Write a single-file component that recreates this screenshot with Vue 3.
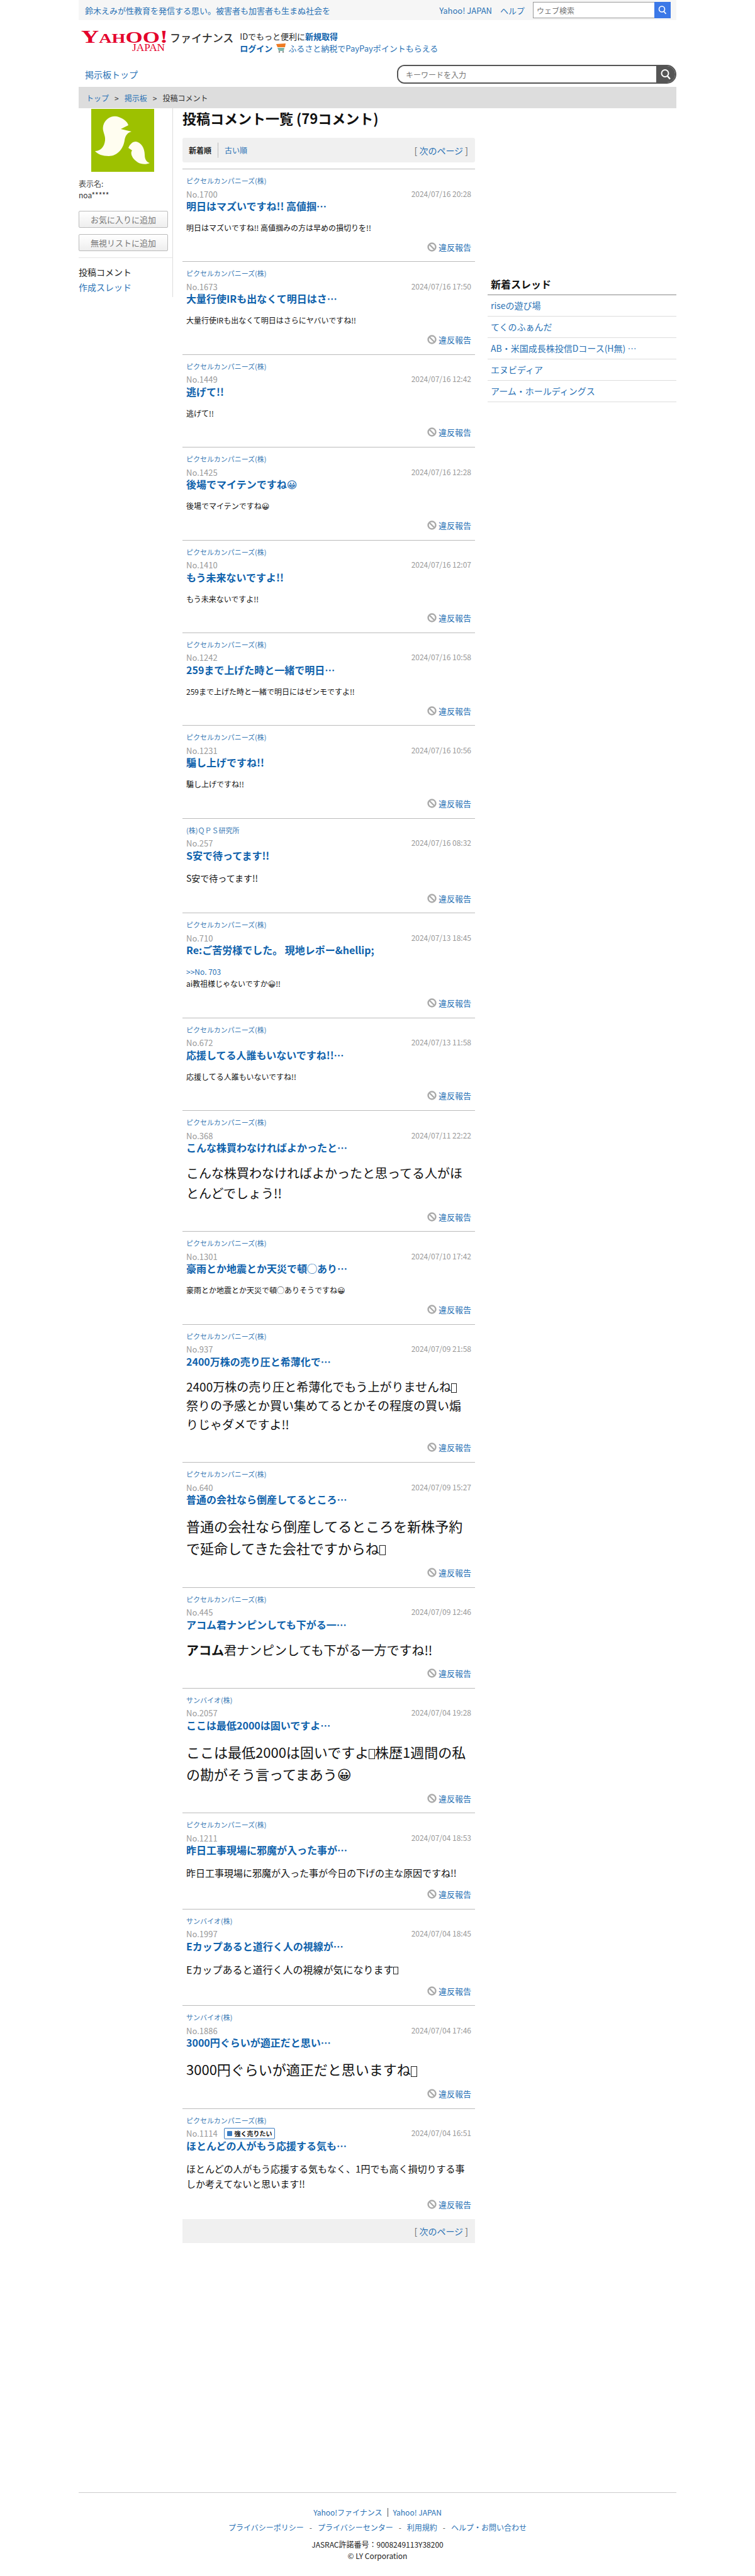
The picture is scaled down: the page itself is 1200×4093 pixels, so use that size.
<template>
  <div class="page">
    <div class="topbar">
      <a class="topbar-news">鈴木えみが性教育を発信する思い。被害者も加害者も生まぬ社会を</a>
      <div class="topbar-right">
        <a>Yahoo! JAPAN</a>
        <a>ヘルプ</a>
        <div class="web-search">
          <input type="text" placeholder="ウェブ検索" />
          <span class="web-search-btn">
            <svg width="16" height="16" viewBox="0 0 16 16">
              <circle cx="7" cy="6.5" r="4.5" fill="none" stroke="#fff" stroke-width="1.6" />
              <path d="M10 10l3.5 4" stroke="#fff" stroke-width="1.8" fill="none" />
            </svg>
          </span>
        </div>
      </div>
    </div>

    <div class="brand">
      <svg class="logo" width="140" height="46" viewBox="0 0 140 46">
        <text x="0" y="29" class="logo-main" textLength="138" lengthAdjust="spacingAndGlyphs">
          <tspan font-size="29">Y</tspan><tspan font-size="21">A</tspan><tspan font-size="21">H</tspan><tspan font-size="26">OO</tspan><tspan font-size="29">!</tspan>
        </text>
        <text x="81" y="42" class="logo-sub" textLength="52" lengthAdjust="spacingAndGlyphs">JAPAN</text>
      </svg>
      <span class="brand-name">ファイナンス</span>
      <div class="brand-info">
        <div>IDでもっと便利に<a class="strong">新規取得</a></div>
        <div class="brand-line">
          <a class="strong">ログイン</a>
          <svg class="cart" width="17" height="15" viewBox="0 0 17 15">
            <path d="M1 1l15-1-1 6H3z" fill="#ee7a22" />
            <path d="M3 7h11l-1 5H5z" fill="#7fb5a8" />
            <circle cx="6" cy="13.5" r="1.2" fill="#777" />
            <circle cx="12" cy="13.5" r="1.2" fill="#777" />
          </svg>
          <a>ふるさと納税でPayPayポイントもらえる</a>
        </div>
      </div>
    </div>

    <div class="navrow">
      <a class="nav-top">掲示板トップ</a>
      <div class="board-search">
        <input type="text" placeholder="キーワードを入力" />
        <span class="board-search-btn">
          <svg width="20" height="20" viewBox="0 0 20 20">
            <circle cx="9" cy="8.5" r="5.5" fill="none" stroke="#fff" stroke-width="2" />
            <path d="M13 13l4 4.5" stroke="#fff" stroke-width="2.4" fill="none" />
          </svg>
        </span>
      </div>
    </div>

    <div class="breadcrumb">
      <a>トップ</a><span class="crumb-sep">&gt;</span><a>掲示板</a><span class="crumb-sep">&gt;</span><span>投稿コメント</span>
    </div>

    <div class="content">
      <aside class="side-left">
        <svg class="avatar" width="100" height="100" viewBox="0 0 100 100">
          <rect width="100" height="100" fill="#9dc100" />
          <path d="M19 27C22 15 34 9 44 13C52 16 58 21 59 26L47 32L64 36C57 38 54 43 53 50C51 64 41 75 28 75C18 75 10 72 6 67C15 67 21 60 22 50C23 41 17 36 19 27Z" fill="#fffdf0" />
          <path d="M71 52C65 52 61 57 59 62L65 66C61 71 66 80 74 85C79 88 87 89 93 86C88 85 85 80 85 73C85 62 79 53 71 52Z" fill="#fffdf0" />
        </svg>
        <div class="profile-label">表示名:</div>
        <div class="profile-name">noa*****</div>
        <div class="side-btn">お気に入りに追加</div>
        <div class="side-btn">無視リストに追加</div>
        <div class="side-menu">
          <div class="side-menu-item">投稿コメント</div>
          <a class="side-menu-item">作成スレッド</a>
        </div>
      </aside>

      <main class="main">
        <h1 class="page-title">投稿コメント一覧 (79コメント)</h1>
        <div class="sort-bar">
          <span class="sort-active">新着順</span>
          <a class="sort-link">古い順</a>
          <span class="pager">[ <a>次のページ</a> ]</span>
        </div>

        <article v-for="c in comments" :key="c.no" class="comment">
          <a class="company">{{ c.company }}</a>
          <div class="meta">
            <span class="no">No.{{ c.no }}</span>
            <span v-if="c.badge" class="badge"><i class="badge-mark"></i>{{ c.badge }}</span>
            <span class="date">{{ c.date }}</span>
          </div>
          <a class="title">{{ c.title }}</a>
          <div class="body" :style="{ fontSize: c.size + 'px' }">
            <a v-if="c.anchor" class="anchor">{{ c.anchor }}<br /></a>
            <b v-if="c.lead" class="lead">{{ c.lead }}</b>
            <template v-for="(part, i) in bodyParts(c.body)" :key="i">
              <span v-if="i > 0" class="tofu"></span>{{ part }}
            </template>
          </div>
          <div class="report">
            <svg width="15" height="15" viewBox="0 0 15 15">
              <circle cx="7.5" cy="7.5" r="6" fill="none" stroke="#aaa" stroke-width="2.4" />
              <path d="M3.5 3.5l8 8" stroke="#aaa" stroke-width="2.4" />
            </svg>
            <a>違反報告</a>
          </div>
        </article>

        <div class="pager-bar">
          <span class="pager">[ <a>次のページ</a> ]</span>
        </div>
      </main>

      <aside class="side-right">
        <h2 class="thread-heading">新着スレッド</h2>
        <a v-for="t in threads" :key="t" class="thread">{{ t }}</a>
      </aside>
    </div>

    <footer class="footer">
      <div class="footer-row first">
        <a>Yahoo!ファイナンス</a><span class="pipe"></span><a>Yahoo! JAPAN</a>
      </div>
      <div class="footer-row second">
        <a>プライバシーポリシー</a><span class="dash">-</span><a>プライバシーセンター</a><span class="dash">-</span><a>利用規約</a><span class="dash">-</span><a>ヘルプ・お問い合わせ</a>
      </div>
      <div class="footer-row third">JASRAC許諾番号：9008249113Y38200</div>
      <div class="footer-row fourth">© LY Corporation</div>
    </footer>
  </div>
</template>

<script setup>
const PIXEL = 'ピクセルカンパニーズ(株)'
const SANBIO = 'サンバイオ(株)'

const comments = [
  { company: PIXEL, no: 1700, date: '2024/07/16 20:28', title: '明日はマズいですね!! 高値掴…', body: '明日はマズいですね!! 高値掴みの方は早めの損切りを!!', size: 12 },
  { company: PIXEL, no: 1673, date: '2024/07/16 17:50', title: '大量行使IRも出なくて明日はさ…', body: '大量行使IRも出なくて明日はさらにヤバいですね!!', size: 12 },
  { company: PIXEL, no: 1449, date: '2024/07/16 12:42', title: '逃げて!!', body: '逃げて!!', size: 12 },
  { company: PIXEL, no: 1425, date: '2024/07/16 12:28', title: '後場でマイテンですね😀', body: '後場でマイテンですね😀', size: 12 },
  { company: PIXEL, no: 1410, date: '2024/07/16 12:07', title: 'もう未来ないですよ!!', body: 'もう未来ないですよ!!', size: 12 },
  { company: PIXEL, no: 1242, date: '2024/07/16 10:58', title: '259まで上げた時と一緒で明日…', body: '259まで上げた時と一緒で明日にはゼンモですよ!!', size: 12 },
  { company: PIXEL, no: 1231, date: '2024/07/16 10:56', title: '騙し上げですね!!', body: '騙し上げですね!!', size: 12 },
  { company: '(株)ＱＰＳ研究所', no: 257, date: '2024/07/16 08:32', title: 'S安で待ってます!!', body: 'S安で待ってます!!', size: 14 },
  { company: PIXEL, no: 710, date: '2024/07/13 18:45', title: 'Re:ご苦労様でした。 現地レポー&hellip;', anchor: '>>No. 703', body: 'ai教祖様じゃないですか😀!!', size: 12 },
  { company: PIXEL, no: 672, date: '2024/07/13 11:58', title: '応援してる人誰もいないですね!!…', body: '応援してる人誰もいないですね!!', size: 12 },
  { company: PIXEL, no: 368, date: '2024/07/11 22:22', title: 'こんな株買わなければよかったと…', body: 'こんな株買わなければよかったと思ってる人がほとんどでしょう!!', size: 20 },
  { company: PIXEL, no: 1301, date: '2024/07/10 17:42', title: '豪雨とか地震とか天災で頓◯あり…', body: '豪雨とか地震とか天災で頓◯ありそうですね😀', size: 12 },
  { company: PIXEL, no: 937, date: '2024/07/09 21:58', title: '2400万株の売り圧と希薄化で…', body: '2400万株の売り圧と希薄化でもう上がりませんね□\n祭りの予感とか買い集めてるとかその程度の買い煽りじゃダメですよ!!', size: 19 },
  { company: PIXEL, no: 640, date: '2024/07/09 15:27', title: '普通の会社なら倒産してるところ…', body: '普通の会社なら倒産してるところを新株予約で延命してきた会社ですからね□', size: 22 },
  { company: PIXEL, no: 445, date: '2024/07/09 12:46', title: 'アコム君ナンピンしても下がる一…', lead: 'アコム', body: '君ナンピンしても下がる一方ですね!!', size: 20 },
  { company: SANBIO, no: 2057, date: '2024/07/04 19:28', title: 'ここは最低2000は固いですよ…', body: 'ここは最低2000は固いですよ□株歴1週間の私の勘がそう言ってまあう😀', size: 22 },
  { company: PIXEL, no: 1211, date: '2024/07/04 18:53', title: '昨日工事現場に邪魔が入った事が…', body: '昨日工事現場に邪魔が入った事が今日の下げの主な原因ですね!!', size: 15 },
  { company: SANBIO, no: 1997, date: '2024/07/04 18:45', title: 'Eカップあると道行く人の視線が…', body: 'Eカップあると道行く人の視線が気になります□', size: 16 },
  { company: SANBIO, no: 1886, date: '2024/07/04 17:46', title: '3000円ぐらいが適正だと思い…', body: '3000円ぐらいが適正だと思いますね□', size: 22 },
  { company: PIXEL, no: 1114, date: '2024/07/04 16:51', badge: '強く売りたい', title: 'ほとんどの人がもう応援する気も…', body: 'ほとんどの人がもう応援する気もなく、1円でも高く損切りする事しか考えてないと思います!!', size: 15 },
]

const threads = ['riseの遊び場', 'てくのふぁんだ', 'AB・米国成長株投信Dコース(H無) …', 'エヌビディア', 'アーム・ホールディングス']

// the square stands for the glyph the original page could not draw
function bodyParts(text) {
  return text.split('□')
}
</script>

<style>
html,
body {
  background: #fff;
}
</style>

<style scoped>
.page {
  width: 950px;
  margin: 0 auto;
  font-family: "Noto Sans CJK JP", "DejaVu Sans", sans-serif;
  font-size: 12px;
  color: #222;
  height: 4093px;
  overflow: hidden;
}

a {
  color: #2a72b5;
  text-decoration: none;
}

.topbar {
  display: flex;
  justify-content: space-between;
  align-items: center;
  height: 32px;
  padding: 0 9px 0 10px;
  background: #f6f6f6;
  font-size: 13px;
}

.topbar-right {
  display: flex;
  align-items: center;
  gap: 13px;
}

.web-search {
  display: flex;
  width: 219px;
  height: 26px;
  border: 1px solid #999;
  box-sizing: border-box;
  background: #fff;
}

.web-search input {
  flex: 1;
  min-width: 0;
  border: 0;
  padding: 0 5px;
  font: 12px "Noto Sans CJK JP", sans-serif;
  outline: none;
}

.web-search-btn {
  display: flex;
  align-items: center;
  justify-content: center;
  width: 26px;
  margin: -1px -1px -1px 0;
  background: #3b78e7;
}

.brand {
  display: flex;
  height: 71px;
  padding: 7px 0 0 4px;
  box-sizing: border-box;
}

.logo {
  flex: none;
}

.logo-main {
  font-family: "Liberation Serif", serif;
  font-weight: 700;
  fill: #e4002b;
}

.logo-sub {
  font-family: "Liberation Serif", serif;
  font-size: 16px;
  fill: #e4002b;
}

.brand-name {
  margin: 9px 0 0 1px;
  font-size: 17px;
  line-height: 24px;
  font-weight: 500;
  color: #333;
}

.brand-info {
  margin: 9px 0 0 10px;
  font-size: 13px;
  line-height: 19px;
  color: #222;
}

.brand-line {
  display: flex;
  align-items: center;
}

.strong {
  font-weight: 700;
  color: #0f62ac;
}

.cart {
  margin: 0 3px 0 5px;
}

.navrow {
  display: flex;
  justify-content: space-between;
  align-items: center;
  height: 30px;
  padding-left: 10px;
}

.nav-top {
  font-size: 14px;
}

.board-search {
  display: flex;
  width: 444px;
  height: 30px;
  box-sizing: border-box;
  border: 2px solid #555;
  border-radius: 12px 15px 15px 12px;
  overflow: hidden;
}

.board-search input {
  flex: 1;
  min-width: 0;
  border: 0;
  padding: 0 12px;
  font: 12px "Noto Sans CJK JP", sans-serif;
  outline: none;
}

.board-search-btn {
  display: flex;
  align-items: center;
  justify-content: center;
  width: 30px;
  background: #555;
}

.breadcrumb {
  display: flex;
  align-items: center;
  height: 34px;
  margin-top: 5px;
  padding-left: 12px;
  background: #ddd;
  color: #333;
}

.crumb-sep {
  margin: 0 9px;
}

.content {
  display: flex;
  align-items: flex-start;
}

.side-left {
  box-sizing: border-box;
  width: 150px;
  height: 300px;
  padding-top: 1px;
  border-right: 1px solid #ddd;
}

.avatar {
  display: block;
  margin-left: 20px;
}

.profile-label {
  margin-top: 10px;
  line-height: 18px;
  color: #444;
}

.profile-name {
  line-height: 18px;
  color: #333;
}

.side-btn {
  width: 142px;
  height: 27px;
  box-sizing: border-box;
  margin-bottom: 10px;
  border: 1px solid #bbb;
  border-radius: 2px;
  background: linear-gradient(#fff, #eee);
  color: #777;
  font-size: 13px;
  line-height: 26px;
  text-align: center;
}

.profile-name + .side-btn {
  margin-top: 16px;
}

.side-menu {
  margin-top: 10px;
  padding-top: 10px;
  border-top: 1px solid #e5e5e5;
  font-size: 14px;
  line-height: 24px;
}

.side-menu-item {
  display: block;
}

.main {
  width: 465px;
  margin-left: 15px;
}

.page-title {
  margin: 0 0 17px;
  font-size: 22px;
  line-height: 30px;
  font-weight: 700;
  color: #111;
}

.sort-bar {
  display: flex;
  align-items: center;
  height: 39px;
  margin-bottom: 10px;
  padding: 0 11px 0 10px;
  border-radius: 3px;
  background: #f0f0f0;
}

.sort-active {
  padding-right: 10px;
  border-right: 1px dotted #888;
  font-weight: 700;
  line-height: 23px;
}

.sort-link {
  margin-left: 10px;
}

.pager {
  margin-left: auto;
  font-size: 14px;
  color: #666;
}

.comment {
  display: block;
  padding: 9px 6px 13.2px;
  border-top: 1px solid #bbb;
}

.company {
  display: block;
  font-size: 11px;
  line-height: 18px;
  color: #3a7ab5;
}

.meta {
  display: flex;
  align-items: center;
  height: 18px;
  margin-top: 3px;
}

.no {
  font-size: 13px;
  color: #999;
}

.badge {
  display: inline-flex;
  align-items: center;
  height: 18px;
  box-sizing: border-box;
  margin-left: 10px;
  padding: 0 3px 0 4px;
  border: 1px solid #3b7bc0;
  border-radius: 2px;
  font-size: 10px;
  font-weight: 700;
  color: #111;
}

.badge-mark {
  width: 8px;
  height: 8px;
  margin-right: 4px;
  border-radius: 1px;
  background: #3b7bc0;
}

.date {
  margin-left: auto;
  font-size: 12px;
  color: #999;
  position: relative;
  top: -1px;
}

.title {
  display: block;
  font-size: 16px;
  line-height: 20px;
  font-weight: 700;
  color: #0f62ac;
}

.body {
  margin-top: 15px;
  line-height: 1.6;
  color: #111;
  white-space: pre-line;
  word-break: break-all;
}

.anchor {
  color: #2a72b5;
}

.lead {
  font-weight: 700;
}

.tofu {
  display: inline-block;
  box-sizing: border-box;
  width: 0.45em;
  height: 0.75em;
  border: 1px solid #222;
  vertical-align: -0.1em;
}

.report {
  display: flex;
  justify-content: flex-end;
  align-items: center;
  gap: 3px;
  height: 20px;
  margin-top: 11px;
  font-size: 13px;
}

.pager-bar {
  display: flex;
  align-items: center;
  height: 38px;
  padding-right: 11px;
  background: #f0f0f0;
}

.side-right {
  width: 300px;
  margin: 263px 0 0 20px;
}

.thread-heading {
  margin: 0;
  padding: 0 5px;
  font-size: 16px;
  line-height: 33px;
  font-weight: 700;
  color: #111;
  border-bottom: 1px solid #888;
}

.thread {
  display: block;
  padding: 0 5px;
  font-size: 14px;
  line-height: 33px;
  border-bottom: 1px solid #ddd;
}

.footer {
  margin-top: 396px;
  padding-top: 22px;
  border-top: 1px solid #ccc;
  text-align: center;
  line-height: 18px;
}

.footer-row.second {
  margin-top: 6px;
}

.footer-row.third {
  margin-top: 9px;
  color: #222;
}

.pipe {
  display: inline-block;
  width: 1px;
  height: 14px;
  margin: 0 8px;
  background: #555;
  vertical-align: -2px;
}

.dash {
  margin: 0 9px;
  color: #555;
}
</style>
